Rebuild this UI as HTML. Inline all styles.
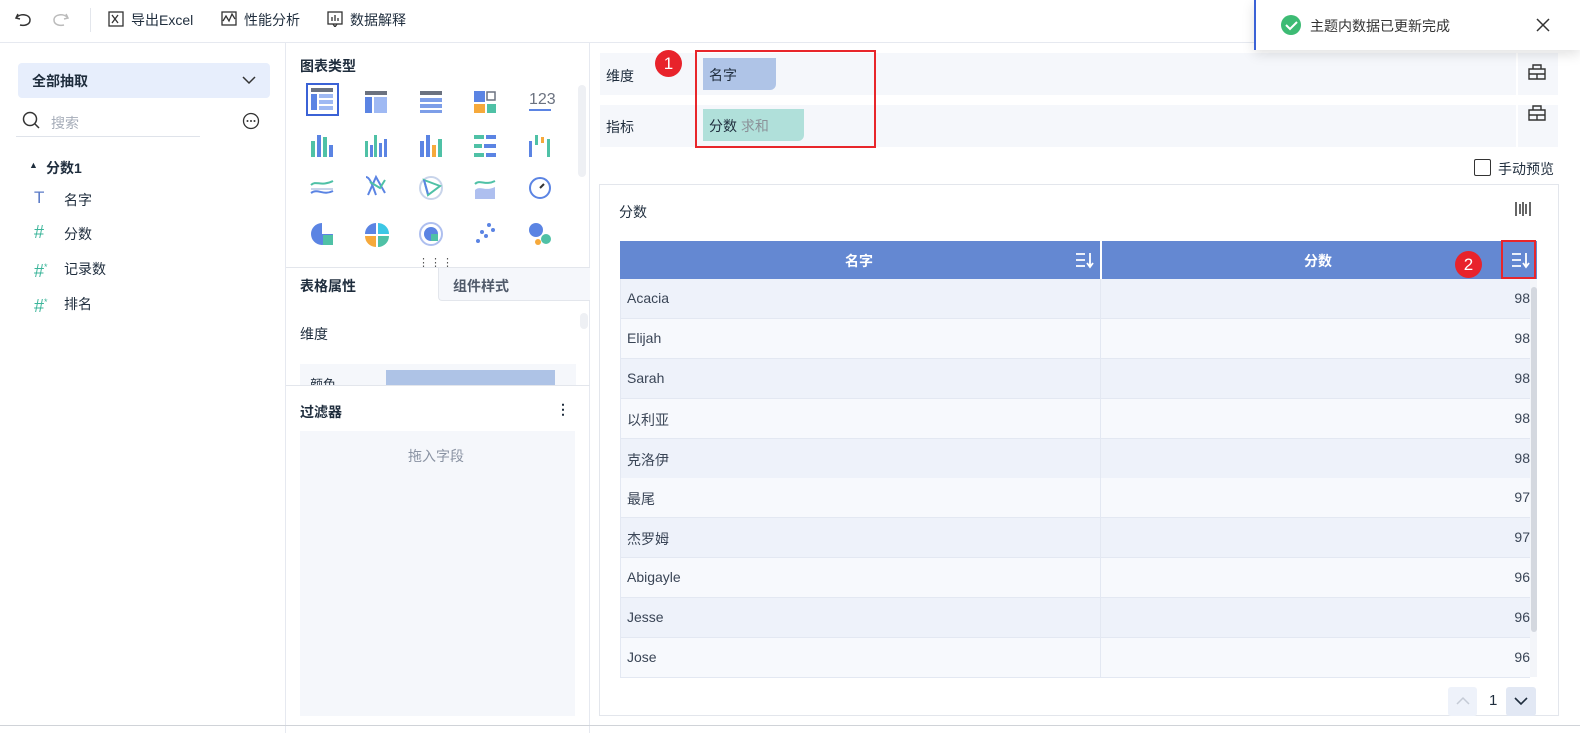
<!DOCTYPE html>
<html><head><meta charset="utf-8"><style>
*{box-sizing:border-box;margin:0;padding:0}
body{width:1580px;height:733px;overflow:hidden;background:#fff;font-family:"Liberation Sans","Noto Sans CJK SC",sans-serif;font-size:14px;color:#1f2d3d;position:relative}
.a{position:absolute}
.tb span{position:absolute;top:10px;font-size:14px;color:#1f2d3d}
.row{position:absolute;left:620px;width:910px;height:40px;border-bottom:1px solid #e3e8f2}
.row .n{position:absolute;left:7px;top:11px;color:#3a4556}
.row .v{position:absolute;right:0;top:11px;color:#3a4556}
.row .d{position:absolute;left:480px;top:0;width:1px;height:40px;background:#e3e8f2}
.hs{position:absolute;left:34px;color:#3bb59a;font-size:18px;line-height:18px}
</style></head><body>
<div class="a" style="left:0;top:0;width:1580px;height:43px;border-bottom:1px solid #e6e9f0"></div>
<svg class="a" style="left:14px;top:10px" width="60" height="20"><path d="M4 4 L2 8 L6 9 M2 8 C6 3 16 4 16 10 C16 15 10 16 6 15" fill="none" stroke="#333" stroke-width="1.5"/><path d="M52 4 L54 8 L50 9 M54 8 C50 3 40 4 40 10 C40 15 46 16 50 15" fill="none" stroke="#bbb" stroke-width="1.5"/></svg>
<div class="a" style="left:90px;top:8px;width:1px;height:24px;background:#e3e6ec"></div>
<div class="tb">
<svg class="a" style="left:108px;top:11px" width="16" height="16"><rect x="1" y="1" width="14" height="14" fill="none" stroke="#333" stroke-width="1.3"/><path d="M4 4l6 8M10 4l-6 8" stroke="#333" stroke-width="1.3"/></svg>
<span style="left:131px">导出Excel</span>
<svg class="a" style="left:221px;top:11px" width="16" height="16"><rect x="1" y="1" width="14" height="13" fill="none" stroke="#333" stroke-width="1.3"/><path d="M2 10l3-5 3 5 3-7 3 5" fill="none" stroke="#333" stroke-width="1.3"/></svg>
<span style="left:244px">性能分析</span>
<svg class="a" style="left:327px;top:11px" width="16" height="16"><rect x="1" y="1" width="14" height="12" fill="none" stroke="#333" stroke-width="1.3"/><path d="M5 10V6M8 10V4M11 10V7M6 13l2 3 2-3" fill="none" stroke="#333" stroke-width="1.3"/></svg>
<span style="left:350px">数据解释</span>
</div>
<div class="a" style="left:285px;top:43px;width:1px;height:690px;background:#e6e9f0"></div>
<div class="a" style="left:18px;top:63px;width:252px;height:35px;background:#e7eefc;border-radius:4px"><span class="a" style="left:14px;top:8px;font-weight:bold;font-size:14px">全部抽取</span><svg class="a" style="left:224px;top:10px" width="14" height="14"><path d="M1 4l6 6 6-6" fill="none" stroke="#333" stroke-width="1.5"/></svg></div>
<svg class="a" style="left:22px;top:111px" width="20" height="20"><circle cx="8" cy="8" r="6.5" fill="none" stroke="#333" stroke-width="1.5"/><path d="M13 13l4 4" stroke="#333" stroke-width="1.5"/></svg>
<span class="a" style="left:51px;top:113px;color:#a5acb8">搜索</span>
<div class="a" style="left:16px;top:136px;width:184px;height:1px;background:#dfe3ea"></div>
<svg class="a" style="left:242px;top:112px" width="18" height="18"><circle cx="9" cy="9" r="7.5" fill="none" stroke="#333" stroke-width="1.3"/><circle cx="5.5" cy="9" r="1" fill="#333"/><circle cx="9" cy="9" r="1" fill="#333"/><circle cx="12.5" cy="9" r="1" fill="#333"/></svg>
<span class="a" style="left:29px;top:160px;font-size:9px">▲</span>
<span class="a" style="left:46px;top:158px;font-weight:bold">分数1</span>
<span class="a" style="left:34px;top:188px;color:#5b7bc7;font-size:17px">T</span><span class="a" style="left:64px;top:190px">名字</span>
<span class="hs" style="top:223px">#</span><span class="a" style="left:64px;top:224px">分数</span>
<span class="hs" style="top:258px">#<sup style="font-size:9px">*</sup></span><span class="a" style="left:64px;top:259px">记录数</span>
<span class="hs" style="top:293px">#<sup style="font-size:9px">*</sup></span><span class="a" style="left:64px;top:294px">排名</span>
<div class="a" style="left:589px;top:43px;width:1px;height:690px;background:#e6e9f0"></div>
<span class="a" style="left:300px;top:56px;font-weight:bold">图表类型</span>
<div class="a" style="left:578px;top:85px;width:8px;height:92px;background:#eef0f4;border-radius:4px"></div>
<div class="a" style="left:306px;top:83px;width:33px;height:33px;border:2px solid #3b62d6"></div>
<svg class="a" style="left:300px;top:80px" width="270" height="175">
<g transform="translate(11,8)"><rect width="22" height="4" fill="#6b7280"/><rect y="6" width="6" height="16" fill="#5b84e3"/><rect x="8" y="6" width="14" height="4" fill="#9fb9f3"/><rect x="8" y="12" width="14" height="4" fill="#9fb9f3"/><rect x="8" y="18" width="14" height="4" fill="#9fb9f3"/></g>
<g transform="translate(65,11)"><rect width="22" height="4" fill="#6b7280"/><rect y="6" width="7" height="16" fill="#5b84e3"/><rect x="9" y="6" width="13" height="16" fill="#9fb9f3"/></g>
<g transform="translate(120,11)"><rect width="22" height="4" fill="#6b7280"/><rect y="7" width="22" height="4" fill="#7d9ee8"/><rect y="13" width="22" height="4" fill="#7d9ee8"/><rect y="19" width="22" height="3" fill="#7d9ee8"/></g>
<g transform="translate(174,11)"><rect width="11" height="11" fill="#5b84e3"/><rect x="13" y="1" width="8" height="8" fill="none" stroke="#6b7280" stroke-width="1.5"/><rect y="13" width="11" height="9" fill="#f6a93b"/><rect x="13" y="13" width="9" height="9" fill="#4fc1a6"/></g>
<text x="229" y="24" font-size="16" fill="#6b7280" font-family="Liberation Sans">123</text><rect x="229" y="29" width="22" height="2" fill="#5b84e3"/>
<g transform="translate(11,55)" fill="#5b84e3"><rect x="6" width="4" height="22"/><rect x="12" y="2" width="4" height="20" fill="#4fc1a6"/><rect x="0" y="6" width="4" height="16" fill="#4fc1a6"/><rect x="18" y="10" width="4" height="12"/></g>
<g transform="translate(65,55)"><rect y="6" width="3" height="16" fill="#4fc1a6"/><rect x="5" y="10" width="3" height="12" fill="#5b84e3"/><rect x="9" width="3" height="22" fill="#4fc1a6"/><rect x="14" y="8" width="3" height="14" fill="#5b84e3"/><rect x="19" y="4" width="3" height="18" fill="#5b84e3"/></g>
<g transform="translate(120,55)"><rect y="6" width="4" height="16" fill="#5b84e3"/><rect x="6" width="4" height="22" fill="#5b84e3"/><rect x="12" y="10" width="4" height="12" fill="#f6a93b"/><rect x="18" y="4" width="4" height="18" fill="#4fc1a6"/></g>
<g transform="translate(174,55)"><rect width="10" height="4" fill="#4fc1a6"/><rect x="12" width="10" height="4" fill="#5b84e3"/><rect y="9" width="8" height="4" fill="#4fc1a6"/><rect x="10" y="9" width="12" height="4" fill="#5b84e3"/><rect y="18" width="10" height="4" fill="#4fc1a6"/><rect x="12" y="18" width="10" height="4" fill="#5b84e3"/></g>
<g transform="translate(229,55)"><rect y="6" width="3" height="16" fill="#5b84e3"/><rect x="6" width="3" height="10" fill="#4fc1a6"/><rect x="12" y="2" width="3" height="6" fill="#f6a93b"/><rect x="18" y="4" width="3" height="18" fill="#4fc1a6"/></g>
<g fill="none" stroke-width="2"><path d="M11 105c5-5 10 2 22-4" stroke="#4fc1a6"/><path d="M11 113c7-5 12 3 22-2" stroke="#5b84e3"/><path d="M11 109h22" stroke="#c8d4ea"/>
<path d="M66 97c4 0 7 10 10 18M68 115l8-18 9 16" stroke="#5b84e3"/><path d="M70 102l10 6 5-8" stroke="#4fc1a6"/>
<circle cx="131" cy="108" r="11" stroke="#c8d4ea"/><path d="M124 100l16 6-12 9z" stroke="#4fc1a6"/><path d="M124 100l4 14" stroke="#5b84e3"/>
<path d="M175 104c5-5 10 2 20-3" stroke="#4fc1a6"/><circle cx="240" cy="108" r="10" stroke="#5b84e3"/><path d="M240 108l4-4" stroke="#333"/></g>
<path d="M175 110c5-5 10 2 20-3v12h-20z" fill="#aebfef"/>
<g transform="translate(0,154)"><path d="M22 -11a11 11 0 1 0 11 11h-11z" fill="#5b84e3"/><rect x="23" y="1" width="10" height="10" fill="#4fc1a6"/>
<path d="M76 -11a11 11 0 0 0 -11 11h11z" fill="#5b84e3"/><path d="M78 -11a11 11 0 0 1 11 11h-11z" fill="#3cc7e5"/><path d="M65 2a11 11 0 0 0 11 11v-11z" fill="#f6a93b"/><path d="M78 2v11a11 11 0 0 0 11-11z" fill="#4fc1a6"/>
<circle cx="131" cy="0" r="11" fill="none" stroke="#aebfef" stroke-width="2"/><circle cx="131" cy="0" r="7" fill="#5b84e3"/><rect x="131" y="0" width="7" height="7" fill="#4fc1a6"/>
<g fill="#5b84e3"><circle cx="178" cy="7" r="2"/><circle cx="186" cy="2" r="2"/><circle cx="193" cy="-4" r="2"/><circle cx="182" cy="-2" r="2"/><circle cx="189" cy="-9" r="2"/></g>
<circle cx="236" cy="-4" r="7" fill="#5b84e3"/><circle cx="246" cy="5" r="5" fill="#4fc1a6"/><circle cx="238" cy="8" r="3" fill="#f6a93b"/></g>
</svg>
<div class="a" style="left:286px;top:267px;width:304px;height:1px;background:#e3e6ec"></div>
<div class="a" style="left:438px;top:268px;width:152px;height:33px;background:#f5f7fb;border-left:1px solid #e3e6ec;border-bottom:1px solid #e3e6ec;border-bottom-left-radius:4px"></div>
<span class="a" style="left:300px;top:276px;font-weight:bold">表格属性</span>
<span class="a" style="left:453px;top:276px;color:#505a6a;font-weight:bold">组件样式</span>
<span class="a" style="left:300px;top:324px">维度</span>
<div class="a" style="left:580px;top:313px;width:8px;height:16px;background:#eef0f4;border-radius:4px"></div>
<div class="a" style="left:300px;top:364px;width:276px;height:22px;background:#f5f7fb"></div>
<div class="a" style="left:386px;top:370px;width:169px;height:16px;background:#aec3e6"></div>
<span class="a" style="left:310px;top:374px;font-size:13px;height:12px;overflow:hidden">颜色</span>
<div class="a" style="left:286px;top:385px;width:304px;height:1px;background:#e3e6ec"></div>
<span class="a" style="left:418px;top:256px;font-size:11px;color:#555;letter-spacing:1px">⋮⋮⋮</span>
<span class="a" style="left:300px;top:402px;font-weight:bold">过滤器</span>
<span class="a" style="left:556px;top:401px;font-weight:bold">⋮</span>
<div class="a" style="left:300px;top:431px;width:275px;height:285px;background:#f5f7fb"></div>
<span class="a" style="left:408px;top:446px;color:#8a93a3">拖入字段</span>
<div class="a" style="left:600px;top:53px;width:958px;height:42px;background:#f5f7fb"></div>
<div class="a" style="left:600px;top:105px;width:958px;height:42px;background:#f5f7fb"></div>
<div class="a" style="left:1516px;top:53px;width:2px;height:94px;background:#fff"></div>
<span class="a" style="left:606px;top:66px">维度</span><span class="a" style="left:606px;top:117px">指标</span>
<div class="a" style="left:703px;top:58px;width:73px;height:32px;background:#afc4e7;border-radius:0 0 6px 0"><span class="a" style="left:6px;top:7px">名字</span></div>
<div class="a" style="left:703px;top:109px;width:101px;height:32px;background:#b0e0da;border-radius:0 0 6px 0"><span class="a" style="left:6px;top:7px">分数 <span style="color:#8b9198">求和</span></span></div>
<div class="a" style="left:695px;top:50px;width:181px;height:98px;border:2px solid #e8262b"></div>
<div class="a" style="left:655px;top:50px;width:27px;height:27px;border-radius:50%;background:#e8232b;color:#fff;text-align:center;font-size:17px;line-height:27px">1</div>
<svg class="a" style="left:1527px;top:63px" width="20" height="60"><g fill="none" stroke="#333" stroke-width="1.4"><path d="M2 6h16v10H2zM6 6V2h8v4M2 11h16M10 11v5"/><path d="M2 57h16V47H2zM6 47v-4h8v4M2 52h16M10 52v5"/></g></svg>
<div class="a" style="left:1474px;top:159px;width:17px;height:17px;border:1.5px solid #333;border-radius:2px"></div>
<span class="a" style="left:1498px;top:159px">手动预览</span>
<div class="a" style="left:599px;top:184px;width:960px;height:532px;border:1px solid #e3e6ec"></div>
<span class="a" style="left:619px;top:202px">分数</span>
<svg class="a" style="left:1514px;top:201px" width="18" height="16"><path d="M2 1v14M6 3v10M9 1v14M12 3v10M16 1v14" stroke="#333" stroke-width="1.5"/></svg>
<div class="a" style="left:620px;top:241px;width:917px;height:38px;background:#6488d2"></div>
<div class="a" style="left:1100px;top:241px;width:2px;height:38px;background:#fff"></div>
<span class="a" style="left:845px;top:251px;color:#fff;font-weight:bold">名字</span>
<span class="a" style="left:1304px;top:251px;color:#fff;font-weight:bold">分数</span>
<svg class="a" style="left:1075px;top:251px" width="20" height="18"><g stroke="#fff" stroke-width="1.8" fill="none"><path d="M1 3h9M1 9h9M1 15h9M15 2v13M12 12l3 4 3-4"/></g></svg>
<svg class="a" style="left:1511px;top:251px" width="20" height="18"><g stroke="#fff" stroke-width="1.8" fill="none"><path d="M1 3h9M1 9h9M1 15h9M15 2v13M12 12l3 4 3-4"/></g></svg>
<div class="a" style="left:1501px;top:240px;width:35px;height:39px;border:2px solid #e8262b"></div>
<div class="a" style="left:1455px;top:251px;width:27px;height:27px;border-radius:50%;background:#e8232b;color:#fff;text-align:center;font-size:17px;line-height:27px">2</div>
<div class="row" style="top:279px;background:#eef2fa"><span class="n">Acacia</span><span class="d"></span><span class="v">98</span></div>
<div class="row" style="top:319px;background:#f7f9fd"><span class="n">Elijah</span><span class="d"></span><span class="v">98</span></div>
<div class="row" style="top:359px;background:#eef2fa"><span class="n">Sarah</span><span class="d"></span><span class="v">98</span></div>
<div class="row" style="top:399px;background:#f7f9fd"><span class="n">以利亚</span><span class="d"></span><span class="v">98</span></div>
<div class="row" style="top:439px;background:#eef2fa"><span class="n">克洛伊</span><span class="d"></span><span class="v">98</span></div>
<div class="row" style="top:478px;background:#f7f9fd"><span class="n">最尾</span><span class="d"></span><span class="v">97</span></div>
<div class="row" style="top:518px;background:#eef2fa"><span class="n">杰罗姆</span><span class="d"></span><span class="v">97</span></div>
<div class="row" style="top:558px;background:#f7f9fd"><span class="n">Abigayle</span><span class="d"></span><span class="v">96</span></div>
<div class="row" style="top:598px;background:#eef2fa"><span class="n">Jesse</span><span class="d"></span><span class="v">96</span></div>
<div class="row" style="top:638px;background:#f7f9fd"><span class="n">Jose</span><span class="d"></span><span class="v">96</span></div>
<div class="a" style="left:620px;top:279px;width:1px;height:398px;background:#e3e8f2"></div>
<div class="a" style="left:1530px;top:279px;width:7px;height:398px;background:#f3f5f9"></div>
<div class="a" style="left:1531px;top:287px;width:6px;height:345px;background:#d4d8df;border-radius:3px"></div>
<div class="a" style="left:1448px;top:687px;width:29px;height:29px;background:#eef2fa;border-radius:3px"></div>
<svg class="a" style="left:1455px;top:694px" width="16" height="14"><path d="M2 10l6-6 6 6" fill="none" stroke="#c5cbd6" stroke-width="1.5"/></svg>
<span class="a" style="left:1489px;top:692px;font-size:15px">1</span>
<div class="a" style="left:1506px;top:687px;width:30px;height:29px;background:#e2e8f4;border-radius:3px"></div>
<svg class="a" style="left:1513px;top:694px" width="16" height="14"><path d="M2 4l6 6 6-6" fill="none" stroke="#1f2d3d" stroke-width="1.6"/></svg>
<div class="a" style="left:0;top:725px;width:1580px;height:1px;background:#d0d3d8"></div>
<div class="a" style="left:1254px;top:0;width:326px;height:50px;background:#fff;box-shadow:0 4px 12px rgba(0,0,0,0.12);border-left:2px solid #3b62d6"></div>
<svg class="a" style="left:1280px;top:14px" width="22" height="22"><circle cx="11" cy="11" r="10" fill="#3dbb74"/><path d="M6 11l4 4 7-7" fill="none" stroke="#fff" stroke-width="2"/></svg>
<span class="a" style="left:1310px;top:16px;color:#333">主题内数据已更新完成</span>
<svg class="a" style="left:1535px;top:17px" width="16" height="16"><path d="M2 2l12 12M14 2L2 14" stroke="#333" stroke-width="1.5"/></svg>
</body></html>
